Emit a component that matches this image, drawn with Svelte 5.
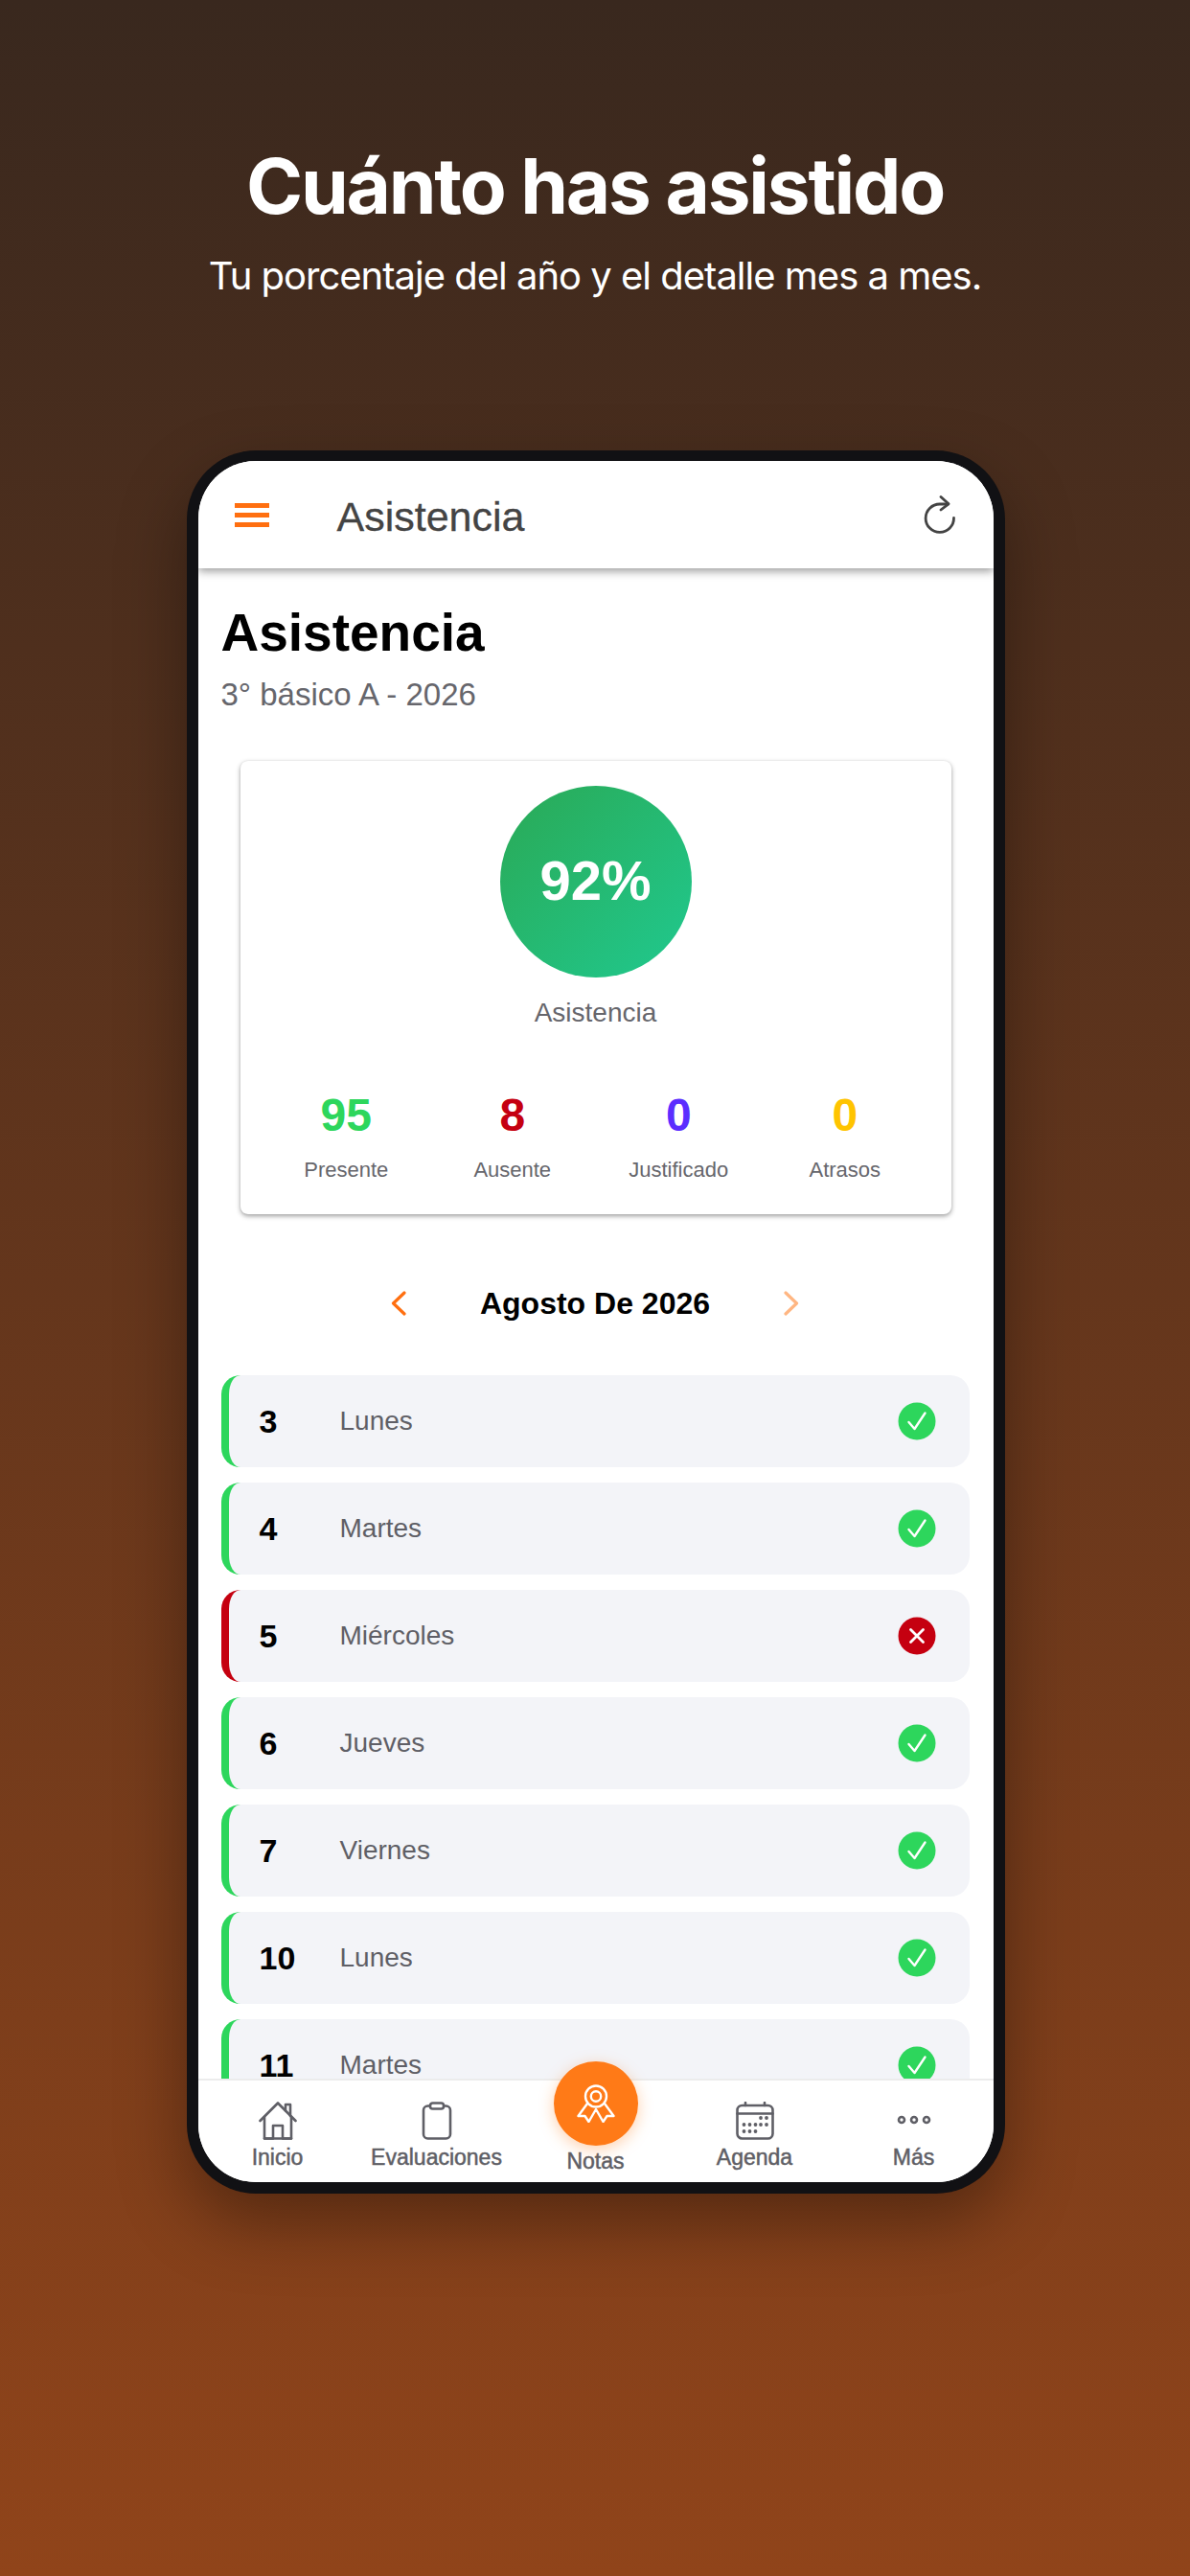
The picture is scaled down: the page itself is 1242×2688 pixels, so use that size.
<script>
  const stats = [
    { n: '95', l: 'Presente', c: 'green' },
    { n: '8', l: 'Ausente', c: 'red' },
    { n: '0', l: 'Justificado', c: 'violet' },
    { n: '0', l: 'Atrasos', c: 'amber' }
  ];
  const days = [
    { n: 3, d: 'Lunes', ok: true },
    { n: 4, d: 'Martes', ok: true },
    { n: 5, d: 'Miércoles', ok: false },
    { n: 6, d: 'Jueves', ok: true },
    { n: 7, d: 'Viernes', ok: true },
    { n: 10, d: 'Lunes', ok: true },
    { n: 11, d: 'Martes', ok: true }
  ];
</script>

<div class="page">
  <header class="hero">
    <h1>Cuánto has asistido</h1>
    <p>Tu porcentaje del año y el detalle mes a mes.</p>
  </header>

  <div class="phone">
    <div class="screen">
      <div class="topbar">
        <div class="burger"><i></i><i></i><i></i></div>
        <div class="topbar-title">Asistencia</div>
        <svg class="refresh" viewBox="0 0 34 40" fill="none" stroke="#444" stroke-width="2.8" stroke-linecap="round" stroke-linejoin="round">
          <path d="M31.5 23.5 A14.7 14.7 0 1 1 17 9 H25.5" />
          <path d="M18 1.5 L26 8.8 L18 15" />
        </svg>
      </div>

      <main class="content">
        <h2>Asistencia</h2>
        <div class="course">3° básico A - 2026</div>

        <section class="card">
          <div class="ring">92%</div>
          <div class="ring-label">Asistencia</div>
          <div class="stats">
            {#each stats as s}
              <div class="stat">
                <div class="stat-n {s.c}">{s.n}</div>
                <div class="stat-l">{s.l}</div>
              </div>
            {/each}
          </div>
        </section>

        <div class="month">
          <svg class="chev" viewBox="0 0 16 26" fill="none" stroke="#ff6f10" stroke-width="3.2" stroke-linecap="round" stroke-linejoin="round"><path d="M14 2 L2.5 13 L14 24" /></svg>
          <div class="month-name">Agosto De 2026</div>
          <svg class="chev" viewBox="0 0 16 26" fill="none" stroke="#ffb682" stroke-width="3.2" stroke-linecap="round" stroke-linejoin="round"><path d="M2 2 L13.5 13 L2 24" /></svg>
        </div>

        <div class="rows">
          {#each days as r}
            <div class="row" class:bad={!r.ok}>
              <div class="num">{r.n}</div>
              <div class="day">{r.d}</div>
              {#if r.ok}
                <svg class="mark" viewBox="0 0 40 40"><circle cx="20" cy="20" r="19.5" fill="#2dd65c" /><path d="M11.5 21 L17.5 28 L28.5 11.5" fill="none" stroke="#fff" stroke-width="2.4" stroke-linecap="round" stroke-linejoin="round" /></svg>
              {:else}
                <svg class="mark" viewBox="0 0 40 40"><circle cx="20" cy="20" r="19.5" fill="#c50010" /><path d="M13.5 13.5 L26.5 26.5 M26.5 13.5 L13.5 26.5" fill="none" stroke="#fff" stroke-width="2.8" stroke-linecap="round" /></svg>
              {/if}
            </div>
          {/each}
        </div>
      </main>

      <nav class="tabs">
        <div class="tab">
          <svg class="ico" viewBox="0 0 40 40" fill="none" stroke="#5f5f66" stroke-width="2.6" stroke-linecap="round" stroke-linejoin="round">
            <path d="M1.5 20 L20 1.5 L38.5 20" />
            <path d="M28 9.5 V3 H33 V15" />
            <path d="M6 16 V38.5 H15 V25 H25 V38.5 H34 V16" />
            <path d="M6 38.5 H34" />
          </svg>
          <span>Inicio</span>
        </div>
        <div class="tab">
          <svg class="ico" viewBox="0 0 40 40" fill="none" stroke="#5f5f66" stroke-width="2.6" stroke-linecap="round" stroke-linejoin="round">
            <rect x="6" y="4.5" width="28" height="34" rx="4.5" />
            <rect x="13" y="1.5" width="14" height="6" rx="2.5" fill="#fff" />
          </svg>
          <span>Evaluaciones</span>
        </div>
        <div class="tab center">
          <div class="fab">
            <svg viewBox="0 0 40 40" fill="none" stroke="#fff" stroke-width="2.4" stroke-linecap="round" stroke-linejoin="round">
              <circle cx="20" cy="12.5" r="11" />
              <circle cx="20" cy="12.5" r="5.2" />
              <path d="M11 20 L1.5 33 L8.5 33 L12.5 39 L20 26 L27.5 39 L31.5 33 L38.5 33 L29 20" />
            </svg>
          </div>
          <span>Notas</span>
        </div>
        <div class="tab">
          <svg class="ico" viewBox="0 0 40 40" fill="none" stroke="#5f5f66" stroke-width="2.6" stroke-linecap="round" stroke-linejoin="round">
            <rect x="1.5" y="4" width="37" height="34.5" rx="5" />
            <path d="M1.5 12.5 H38.5 M10 1 V4 M30 1 V4" />
            <g fill="#5f5f66" stroke="none">
              <circle cx="26" cy="17" r="1.9" /><circle cx="32" cy="17" r="1.9" />
              <circle cx="8.5" cy="24" r="1.9" /><circle cx="14.5" cy="24" r="1.9" /><circle cx="20.5" cy="24" r="1.9" /><circle cx="26" cy="24" r="1.9" /><circle cx="32" cy="24" r="1.9" />
              <circle cx="8.5" cy="31" r="1.9" /><circle cx="14.5" cy="31" r="1.9" /><circle cx="20.5" cy="31" r="1.9" />
            </g>
          </svg>
          <span>Agenda</span>
        </div>
        <div class="tab">
          <svg class="ico" viewBox="0 0 40 40" fill="none" stroke="#5f5f66" stroke-width="2.6">
            <circle cx="7" cy="19" r="3" /><circle cx="20" cy="19" r="3" /><circle cx="33" cy="19" r="3" />
          </svg>
          <span>Más</span>
        </div>
      </nav>
    </div>
  </div>
</div>

<style>
  :global(body) { margin: 0; }
  .page {
    width: 1242px;
    height: 2688px;
    box-sizing: border-box;
    overflow: hidden;
    display: flex;
    flex-direction: column;
    align-items: center;
    background: linear-gradient(180deg, #39281e 0%, #90441a 100%);
    font-family: "Liberation Sans", Arial, sans-serif;
  }
  .hero { height: 470px; text-align: center; color: #fff; font-family: Inter, sans-serif; }
  .hero h1 { margin: 0; padding-top: 147px; font-size: 80px; line-height: 94px; font-weight: 700; letter-spacing: -2.2px; }
  .hero p { margin: 0; padding-top: 23px; font-size: 40px; line-height: 48px; font-weight: 400; letter-spacing: -1px; }

  .phone {
    box-sizing: border-box;
    width: 854px;
    height: 1819px;
    padding: 11px 12px 12px;
    margin-left: 1px;
    background: #111114;
    border-radius: 72px;
    box-shadow: 0 30px 70px rgba(0, 0, 0, 0.35);
  }
  .screen {
    width: 830px;
    height: 1796px;
    background: #fff;
    border-radius: 60px;
    overflow: hidden;
    display: flex;
    flex-direction: column;
  }

  .topbar {
    flex: none;
    height: 112px;
    box-sizing: border-box;
    display: flex;
    align-items: center;
    padding: 0 22px 0 38px;
    background: #fff;
    box-shadow: 0 3px 9px rgba(0, 0, 0, 0.4);
    position: relative;
    z-index: 2;
  }
  .burger { width: 36px; display: flex; flex-direction: column; gap: 5px; }
  .burger i { display: block; height: 5px; background: #ff6f10; }
  .topbar-title { margin-left: 71px; flex: 1; padding-top: 4px; font-size: 43px; color: #444; -webkit-text-stroke: 0.3px #444; }
  .refresh { width: 34px; height: 40px; margin-right: 17px; }

  .content { flex: 1; min-height: 0; overflow: hidden; padding: 0 25px 0 24px; }
  h2 { margin: 0; padding-top: 35px; font-size: 55px; line-height: 64px; font-weight: 700; color: #000; }
  .course { margin-top: 13px; font-size: 33px; line-height: 40px; color: #66666c; }

  .card {
    margin: 49px 19px 0 20px;
    height: 473px;
    box-sizing: border-box;
    padding-top: 26px;
    background: #fff;
    border-radius: 8px;
    box-shadow: 0 2px 5px rgba(0, 0, 0, 0.38), 0 0 3px rgba(0, 0, 0, 0.05);
    display: flex;
    flex-direction: column;
    align-items: center;
  }
  .ring {
    width: 200px;
    height: 200px;
    box-sizing: border-box;
    padding-bottom: 3px;
    border-radius: 50%;
    background: linear-gradient(135deg, #2aa955, #20c98f);
    color: #fff;
    font-size: 58px;
    font-weight: 700;
    display: flex;
    align-items: center;
    justify-content: center;
  }
  .ring-label { margin-top: 20px; font-size: 28px; line-height: 34px; color: #66666c; }
  .stats { margin-top: 62px; width: 694px; display: grid; grid-template-columns: repeat(4, 1fr); text-align: center; }
  .stat-n { font-size: 48px; line-height: 56px; font-weight: 700; }
  .stat-l { margin-top: 16px; font-size: 22px; line-height: 26px; color: #66666c; }
  .green { color: #2dd65c; }
  .red { color: #c50010; }
  .violet { color: #5b2eff; }
  .amber { color: #ffc400; }

  .month { margin-top: 69px; height: 48px; display: flex; align-items: center; justify-content: center; }
  .chev { width: 16px; height: 26px; }
  .month-name { width: 394px; text-align: center; font-size: 32px; font-weight: 700; color: #000; }

  .rows { margin-top: 51px; display: flex; flex-direction: column; gap: 16px; }
  .row {
    flex: none;
    height: 96px;
    box-sizing: border-box;
    display: flex;
    align-items: center;
    padding: 0 35px 0 32px;
    background: #f3f4f8;
    border-left: 8px solid #2dd65c;
    border-radius: 20px;
  }
  .row.bad { border-left-color: #c50010; }
  .num { width: 84px; font-size: 34px; font-weight: 700; color: #000; }
  .day { flex: 1; font-size: 28px; color: #5f5f66; }
  .mark { width: 40px; height: 40px; }

  .tabs {
    flex: none;
    height: 108px;
    box-sizing: border-box;
    display: grid;
    grid-template-columns: repeat(5, 166px);
    background: #fff;
    border-top: 2px solid #ececec;
    position: relative;
    z-index: 3;
  }
  .tab { display: flex; flex-direction: column; align-items: center; padding-top: 22px; }
  .tab span { margin-top: 4px; font-size: 23px; line-height: 28px; color: #5f5f66; -webkit-text-stroke: 0.5px #5f5f66; }
  .ico { width: 40px; height: 40px; flex: none; }
  .center { position: relative; padding-top: 70px; }
  .center span { margin-top: 0; }
  .fab {
    position: absolute;
    top: -20px;
    left: 39px;
    width: 88px;
    height: 88px;
    border-radius: 50%;
    background: #ff7a17;
    box-shadow: 0 4px 16px rgba(255, 122, 23, 0.35);
    display: flex;
    align-items: center;
    justify-content: center;
  }
  .fab svg { width: 40px; height: 40px; }
</style>
